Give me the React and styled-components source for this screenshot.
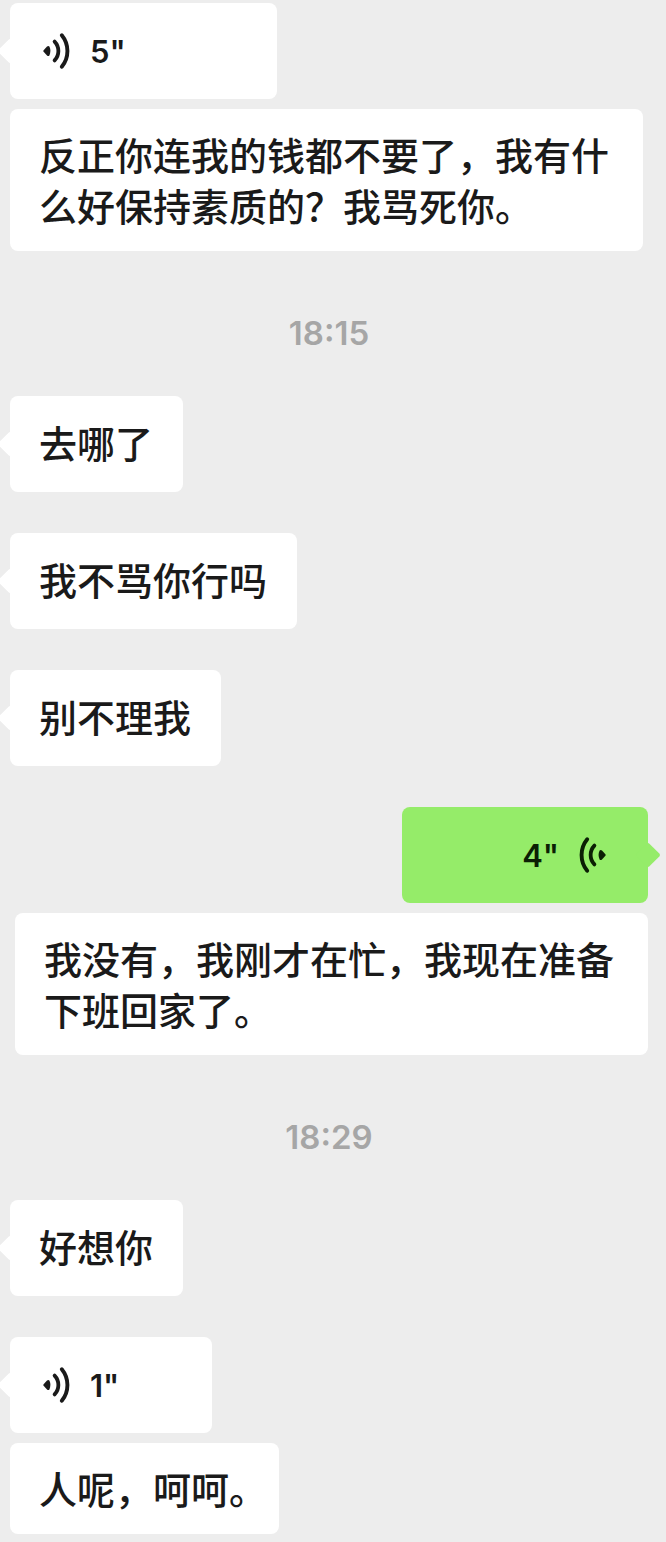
import React from 'react';
import styled, { createGlobalStyle } from 'styled-components';

const GlobalStyle = createGlobalStyle`
  * {
    box-sizing: border-box;
  }
  body {
    margin: 0;
    background: #ededed;
    color: #1a1a1a;
    font-family: Inter, "Noto Sans CJK SC", sans-serif;
  }
`;

const Chat = styled.main`
  display: flex;
  flex-direction: column;
  gap: 41px;
  padding: 3px 18px 8px 10px;
  overflow-x: hidden;
`;

const Message = styled.div`
  display: flex;
  flex-direction: column;
  align-items: ${props => props.$mine ? 'flex-end' : 'flex-start'};
  gap: 10px;
`;

const Bubble = styled.div`
  position: relative;
  min-height: 96px;
  padding: 20px 30px 25px 29px;
  border-radius: 8px;
  background: #fff;
  font-family: "Noto Sans CJK SC", sans-serif;
  font-size: 38px;
  font-weight: 500;
  line-height: 51px;

  &::after {
    content: "";
    position: absolute;
    top: 50%;
    left: 0;
    width: 18px;
    height: 18px;
    border-radius: 2px;
    background: inherit;
    transform: translate(-50%, -50%) rotate(45deg);
  }
`;

const VoiceBubble = styled.button`
  position: relative;
  display: flex;
  flex-direction: ${props => props.$mine ? 'row-reverse' : 'row'};
  align-items: center;
  gap: 20px;
  width: ${props => props.$width}px;
  height: 96px;
  padding: 0 ${props => props.$mine ? '41px' : '32px'};
  border: none;
  border-radius: 8px;
  background: ${props => props.$mine ? '#95ec69' : '#fff'};
  color: ${props => props.$mine ? '#0b1f04' : '#1a1a1a'};
  font-family: Inter, sans-serif;
  font-size: 31px;
  font-weight: 600;
  cursor: pointer;

  &::after {
    content: "";
    position: absolute;
    top: 50%;
    left: ${props => props.$mine ? '100%' : '0'};
    width: 18px;
    height: 18px;
    border-radius: 2px;
    background: inherit;
    transform: translate(-50%, -50%) rotate(45deg);
  }
`;

const Transcript = styled.p`
  max-width: calc(100% - 5px);
  margin: 0;
  padding: 19px 30px 21px 29px;
  padding-right: ${props => props.$short ? '12px' : '30px'};
  border-radius: 8px;
  background: #fff;
  font-family: "Noto Sans CJK SC", sans-serif;
  font-size: 38px;
  font-weight: 500;
  line-height: 51px;
`;

const Time = styled.time`
  padding-top: 19px;
  color: #a6a6a6;
  font-size: 33px;
  font-weight: 600;
  line-height: 44px;
  text-align: center;
`;

const Icon = styled.svg`
  flex: none;
  width: 28px;
  height: 38px;
  transform: ${props => props.$mine ? 'scaleX(-1)' : 'none'};
`;

const VoiceIcon = ({ mine }) => (
  <Icon $mine={mine} viewBox="0 0 28 38" fill="none" aria-hidden="true">
    <path d="M1.6 18.2 L5 14.6 Q6.4 13.2 7.4 14.6 Q9.4 19 7.4 23.4 Q6.4 24.8 5 23.4 L1.6 19.8 Q0.9 19 1.6 18.2 Z" fill="currentColor" />
    <path d="M12.6 9.6 A13.6 13.6 0 0 1 12.6 28.4" stroke="currentColor" strokeWidth="3.8" strokeLinecap="round" />
    <path d="M19.8 3.2 A25 25 0 0 1 19.8 34.8" stroke="currentColor" strokeWidth="3.9" strokeLinecap="round" />
  </Icon>
);

const Voice = ({ mine, seconds, width, text, short }) => (
  <Message $mine={mine}>
    <VoiceBubble type="button" $mine={mine} $width={width}>
      <VoiceIcon mine={mine} />
      <span>{`${seconds}"`}</span>
    </VoiceBubble>
    <Transcript $short={short}>{text}</Transcript>
  </Message>
);

const messages = [
  { type: 'voice', seconds: 5, width: 267, text: '反正你连我的钱都不要了，我有什么好保持素质的？我骂死你。' },
  { type: 'time', text: '18:15' },
  { type: 'text', text: '去哪了' },
  { type: 'text', text: '我不骂你行吗' },
  { type: 'text', text: '别不理我' },
  { type: 'voice', mine: true, seconds: 4, width: 246, text: '我没有，我刚才在忙，我现在准备下班回家了。' },
  { type: 'time', text: '18:29' },
  { type: 'text', text: '好想你' },
  { type: 'voice', seconds: 1, width: 202, text: '人呢，呵呵。', short: true },
];

export default () => {
  return (
    <>
      <GlobalStyle />
      <Chat>
        {messages.map((item, index) => {
          if (item.type === 'time') {
            return <Time key={index}>{item.text}</Time>;
          }
          if (item.type === 'voice') {
            return (
              <Voice
                key={index}
                mine={item.mine}
                seconds={item.seconds}
                width={item.width}
                text={item.text}
                short={item.short}
              />
            );
          }
          return (
            <Message key={index}>
              <Bubble>{item.text}</Bubble>
            </Message>
          );
        })}
      </Chat>
    </>
  );
}
